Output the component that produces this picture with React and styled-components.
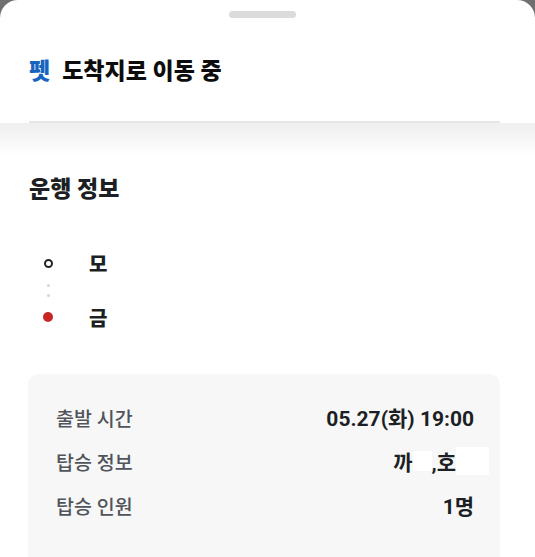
import styled, { createGlobalStyle } from 'styled-components'

const GlobalStyle = createGlobalStyle`
    html, body {
        margin: 0;
        padding: 0;
        background: #707070;
    }
    body {
        font-family: Roboto, "Noto Sans CJK KR", sans-serif;
    }
`

const Sheet = styled.div`
    background: #fff;
    border-radius: 18px 18px 0 0;
    height: 557px;
    overflow: hidden;
    display: flex;
    flex-direction: column;
`

const Header = styled.header`
    position: relative;
    padding: 11px 35px 0 29px;
    display: flex;
    flex-direction: column;

    &::after {
        content: '';
        position: absolute;
        left: 0;
        right: 0;
        top: 100%;
        height: 32px;
        background: linear-gradient(#efefef, rgba(255, 255, 255, 0));
    }
`

const Handle = styled.div`
    align-self: center;
    width: 67px;
    height: 7px;
    border-radius: 4px;
    background: #dcdcdc;
    margin-left: -4px;
`

const Title = styled.h1`
    margin: 38px 0 33px;
    font-size: 23px;
    line-height: 32px;
    font-weight: 800;
    color: #0d0d0d;
    display: flex;
    gap: 12px;
`

const Brand = styled.span`
    color: #1565c0;
`

const Divider = styled.div`
    height: 2px;
    background: #e6e6e6;
`

const Body = styled.main`
    padding: 52px 35px 0 29px;
    display: flex;
    flex-direction: column;
`

const SectionTitle = styled.h2`
    margin: 0;
    font-size: 23px;
    line-height: 30px;
    font-weight: 800;
    color: #1c1f24;
`

const Route = styled.div`
    margin-top: 46px;
    display: flex;
    flex-direction: column;
`

const Stop = styled.div`
    display: flex;
    align-items: center;
    height: 24px;
`

const Marker = styled.span`
    width: 42px;
    display: flex;
    justify-content: center;
    margin-left: -2px;

    &::before {
        content: '';
        box-sizing: border-box;
        width: ${p => p.$end ? 10 : 9}px;
        height: ${p => p.$end ? 10 : 9}px;
        border-radius: 50%;
        background: ${p => p.$end ? '#c62828' : '#fff'};
        border: ${p => p.$end ? 'none' : '2px solid #22252a'};
    }
`

const StopName = styled.span`
    margin-left: 20px;
    font-size: 20px;
    font-weight: 800;
    color: #1c1f24;
`

const Dots = styled.div`
    width: 42px;
    margin-left: -2px;
    height: 30px;
    display: flex;
    flex-direction: column;
    align-items: center;
    justify-content: center;
    gap: 7px;

    span {
        width: 3px;
        height: 3px;
        border-radius: 50%;
        background: #d6d6d6;
    }
`

const Card = styled.section`
    margin-top: 45px;
    margin-left: -1px;
    background: #f7f7f7;
    border-radius: 10px;
    padding: 29px 26px 60px 28px;
    display: flex;
    flex-direction: column;
    gap: 16px;
`

const Row = styled.div`
    display: flex;
    justify-content: space-between;
    align-items: center;
    height: 28px;
`

const Label = styled.span`
    font-size: 19.5px;
    font-weight: 500;
    color: #50545b;
`

const Value = styled.span`
    font-size: 21px;
    font-weight: 700;
    color: #1c1f24;
    display: flex;
    align-items: center;
`

const Redact = styled.span`
    display: inline-block;
    background: #fff;
    width: ${p => p.$w}px;
    height: ${p => p.$h || 20}px;
    margin-right: ${p => p.$over ? -p.$over : 0}px;
`

export default function App() {
    return (
        <>
            <GlobalStyle />
            <Sheet>
                <Header>
                    <Handle />
                    <Title>
                        <Brand>펫</Brand>
                        <span>도착지로 이동 중</span>
                    </Title>
                    <Divider />
                </Header>
                <Body>
                    <SectionTitle>운행 정보</SectionTitle>
                    <Route>
                        <Stop>
                            <Marker />
                            <StopName>모</StopName>
                        </Stop>
                        <Dots><span /><span /></Dots>
                        <Stop>
                            <Marker $end />
                            <StopName>금</StopName>
                        </Stop>
                    </Route>
                    <Card>
                        <Row>
                            <Label>출발 시간</Label>
                            <Value>05.27(화) 19:00</Value>
                        </Row>
                        <Row>
                            <Label>탑승 정보</Label>
                            <Value>
                                까<Redact $w={19} $h={20} />,호<Redact $w={33} $h={28} $over={15} />
                            </Value>
                        </Row>
                        <Row>
                            <Label>탑승 인원</Label>
                            <Value>1명</Value>
                        </Row>
                    </Card>
                </Body>
            </Sheet>
        </>
    )
}
